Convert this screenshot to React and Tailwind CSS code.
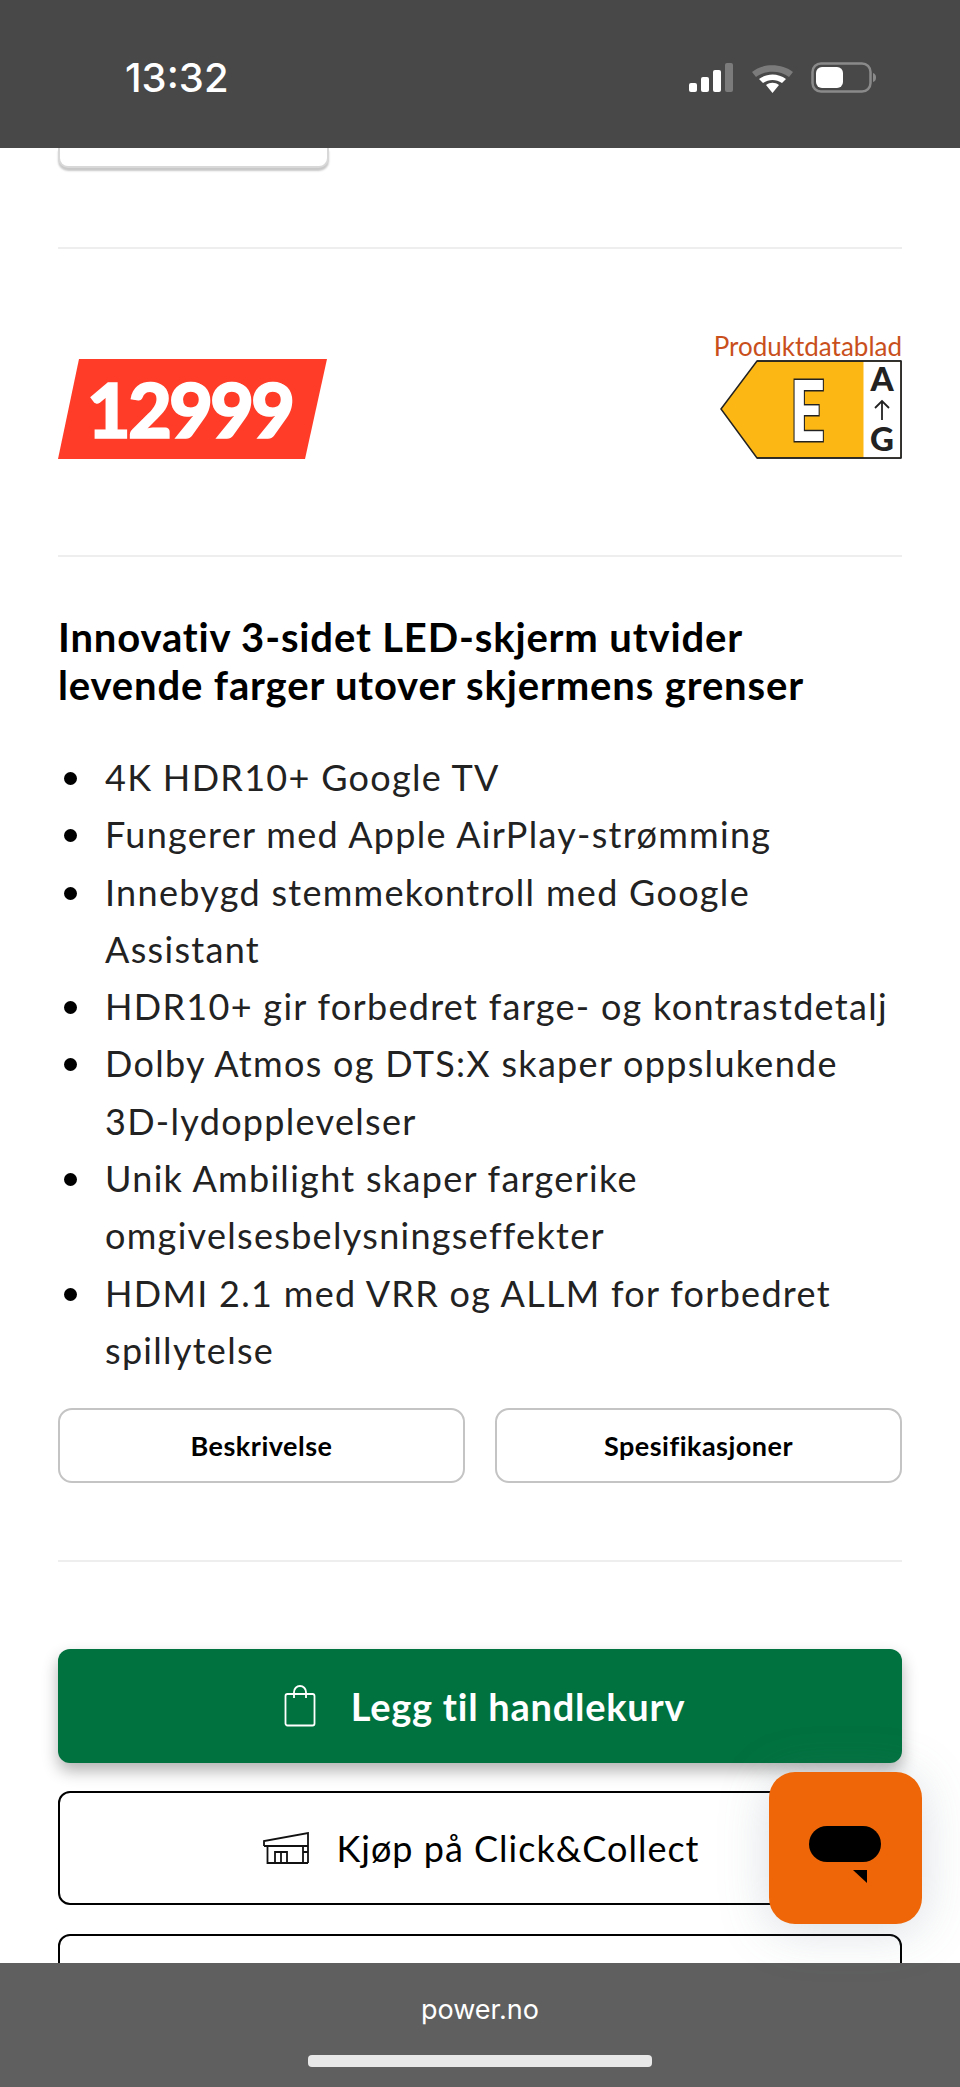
const font = "font-['Lato','Liberation_Sans',sans-serif]";

const bullets = [
  "4K HDR10+ Google TV",
  "Fungerer med Apple AirPlay-strømming",
  "Innebygd stemmekontroll med Google Assistant",
  "HDR10+ gir forbedret farge- og kontrastdetalj",
  "Dolby Atmos og DTS:X skaper oppslukende 3D-lydopplevelser",
  "Unik Ambilight skaper fargerike omgivelsesbelysningseffekter",
  "HDMI 2.1 med VRR og ALLM for forbedret spillytelse",
];

function StatusIcons() {
  return (
    <svg width="190" height="32" viewBox="0 0 190 32" className="block">
      <rect x="1" y="21" width="8" height="9" rx="2" fill="#fff" />
      <rect x="13" y="15" width="8" height="15" rx="2" fill="#fff" />
      <rect x="25" y="8" width="8" height="22" rx="2" fill="#fff" />
      <rect x="37" y="1" width="8" height="29" rx="2" fill="#7b7b7b" />
      <path d="M64 10 C74 1 94 1 105 10 L101 15 C92 8 77 8 68 15 Z" fill="#7b7b7b" />
      <path d="M71 17 C79 11 90 11 98 17 L94 21 C88 17 81 17 75 21 Z" fill="#fff" />
      <path d="M78 23 C82 20 87 20 91 23 L84.5 31 Z" fill="#fff" />
      <rect x="124.500" y="1.500" width="58" height="28" rx="8.500" fill="none" stroke="#8a8a8a" strokeWidth="2.500" />
      <rect x="128" y="5" width="27" height="21" rx="6" fill="#fff" />
      <path d="M185 11 C187.500 12 188 13.500 188 15.500 C188 17.500 187.500 19 185 20 Z" fill="#8a8a8a" />
    </svg>
  );
}

function EnergyLabel() {
  return (
    <svg width="182" height="99" viewBox="0 0 182 99" className="block overflow-visible">
      <path d="M1 49 L37 1 L181 1 L181 98 L37 98 Z" fill="#fdb714" stroke="#222" strokeWidth="1.500" strokeLinejoin="miter" />
      <rect x="143.500" y="1.800" width="36.800" height="95.500" fill="#fff" />
      <path d="M181 1 L181 98 M37 1 L181 1 M37 98 L181 98" stroke="#222" strokeWidth="1.500" />
      <text x="70" y="81" textLength="35" lengthAdjust="spacingAndGlyphs" fontFamily="Lato" fontWeight="900" fontSize="83" fill="#fff" stroke="#222" strokeWidth="3" style={{ paintOrder: "stroke" }}>E</text>
      <text x="162" y="31" textAnchor="middle" fontFamily="Lato" fontWeight="900" fontSize="33" fill="#222">A</text>
      <text x="162" y="91" textAnchor="middle" fontFamily="Lato" fontWeight="900" fontSize="33" fill="#222">G</text>
      <path d="M162 60 L162 42 M155 48 L162 41 L169 48" fill="none" stroke="#222" strokeWidth="1.800" />
    </svg>
  );
}

export default function App() {
  return (
    <div className={`relative w-[960px] h-[2087px] overflow-hidden bg-white flex flex-col ${font}`}>
      <div className="h-[148px] shrink-0 bg-[#484848] flex items-start justify-between pl-[125px] pr-[82px] pt-[57px]">
        <span className="text-[40px] leading-[42px] font-medium text-white font-['Inter',sans-serif]">13:32</span>
        <div className="pt-[5px]"><StatusIcons /></div>
      </div>

      <main className="flex-1 min-h-0 overflow-hidden px-[58px]">
        <div className="w-[271px] h-[20px] bg-white border-2 border-t-0 border-[#d8d8d8] rounded-b-[10px] shadow-[0_3px_2px_#c8c8c8]" />
        <div className="h-[2px] bg-[#eeeeee] mt-[79px]" />

        <div className="h-[306px] flex items-end justify-between pb-[96px]">
          <div className="w-[269px] h-[100px] bg-[#ff3c28] [clip-path:polygon(21px_0,100%_0,247px_100%,0_100%)] flex items-center justify-center pr-[6px]">
            <span className="text-[76px] leading-none font-black text-white tracking-[-3px] [-webkit-text-stroke:1.500px_white]">12999</span>
          </div>
          <div className="flex flex-col items-end">
            <span className="text-[26px] leading-[28px] text-[#c9501c]">Produktdatablad</span>
            <EnergyLabel />
          </div>
        </div>

        <div className="h-[2px] bg-[#eeeeee]" />

        <h1 className="mt-[56px] text-[40px] leading-[48px] font-bold text-black tracking-[0.85px]">
          Innovativ 3-sidet LED-skjerm utvider<br />levende farger utover skjermens grenser
        </h1>

        <ul className="mt-[40px] text-[36px] leading-[57.3px] text-[#222] tracking-[1.3px]">
          {bullets.map((b) => (
            <li key={b} className="flex">
              <span className="shrink-0 w-[13px] h-[13px] rounded-full bg-black mt-[23px] ml-[6px] mr-[28px]" />
              <span>{b}</span>
            </li>
          ))}
        </ul>

        <div className="mt-[29px] grid grid-cols-2 gap-[30px]">
          <button className="h-[75px] rounded-[14px] border-2 border-[#c4c4c4] text-[27px] font-bold text-black tracking-[0.5px]">Beskrivelse</button>
          <button className="h-[75px] rounded-[14px] border-2 border-[#c4c4c4] text-[27px] font-bold text-black tracking-[0.5px]">Spesifikasjoner</button>
        </div>

        <div className="h-[2px] bg-[#eeeeee] mt-[77px]" />

        <button className="mt-[87px] w-full h-[114px] rounded-[12px] bg-[#00723f] shadow-[0_8px_16px_rgba(0,0,0,0.3)] flex items-center justify-center gap-[35px] pl-[9px] text-white text-[38px] font-bold tracking-[0.75px]">
          <svg width="32" height="42" viewBox="0 0 32 42" fill="none" stroke="#fff" strokeWidth="1.800" className="block">
            <rect x="1.500" y="9" width="29" height="31.500" rx="2" />
            <path d="M10 13 V7 a6 6 0 0 1 12 0 V13" />
          </svg>
          <span>Legg til handlekurv</span>
        </button>

        <button className="mt-[28px] w-full h-[114px] rounded-[12px] border-2 border-black bg-white flex items-center justify-center gap-[27px] pl-[3px] text-black text-[36px] tracking-[1px]">
          <svg width="46" height="32" viewBox="0 0 46 32" fill="none" stroke="#111" strokeWidth="1.800" className="block">
            <path d="M1 14 V9 L45 1 V14 H1 M4.500 14 V31 H45 M40 14 V31 M45 20 H40 M45 14 V31 M12 31 V20 H24 V31 M18 20 V31" />
          </svg>
          <span>Kjøp på Click&amp;Collect</span>
        </button>

        <div className="mt-[29px] w-full h-[114px] rounded-[12px] border-2 border-black bg-white" />
      </main>

      <div className="h-[124px] shrink-0 bg-[#5f5f5f] flex flex-col items-center">
        <span className="mt-[33px] text-[27px] leading-[28px] text-white font-['Inter',sans-serif]">power.no</span>
        <div className="mt-[31px] w-[344px] h-[12px] rounded-[4px] bg-[#e8e8e8]" />
      </div>

      <div className="absolute left-[769px] top-[1772px] w-[153px] h-[152px] rounded-[26px] bg-[#ee6607] shadow-[0_6px_50px_rgba(100,120,130,0.25)]">
        <div className="absolute left-[40px] top-[54px] w-[72px] h-[36px] rounded-[18px] bg-black" />
        <div className="absolute left-[84px] top-[98px] w-[14px] h-[13px] bg-black [clip-path:polygon(0_0,100%_0,100%_100%)]" />
      </div>
    </div>
  );
}
